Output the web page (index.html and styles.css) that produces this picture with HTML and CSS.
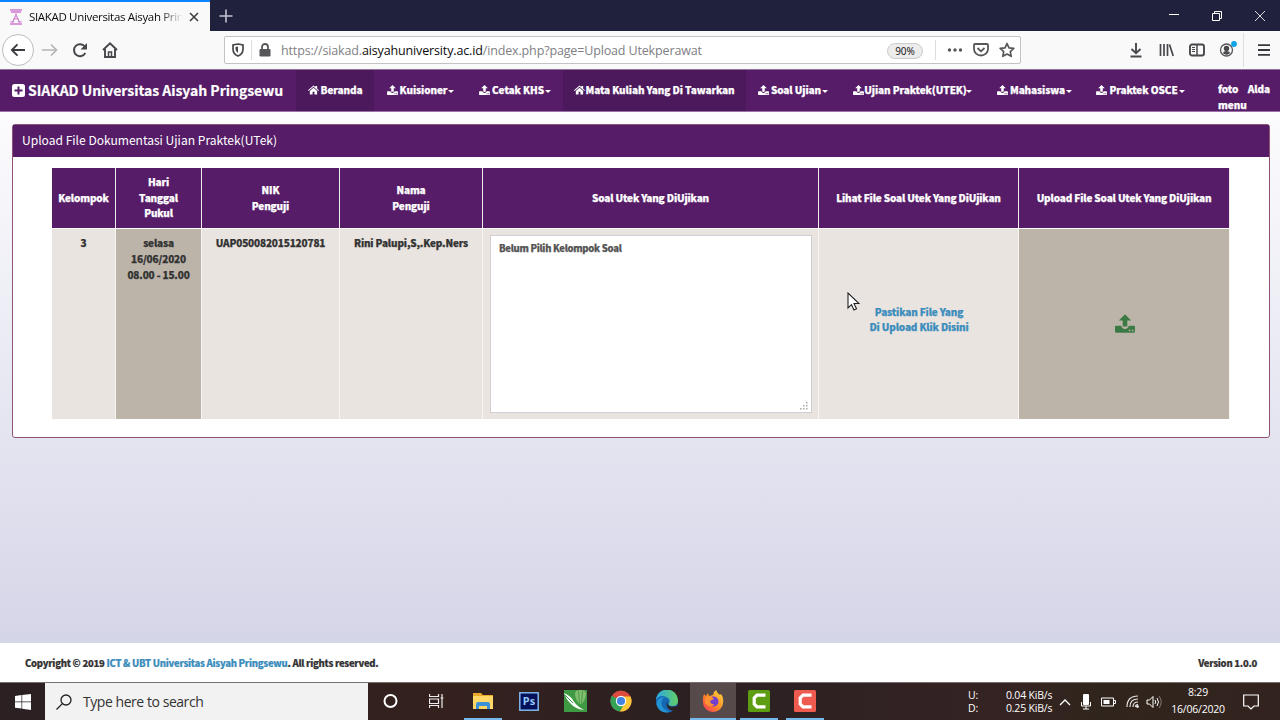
FILE: index.html
```html
<!DOCTYPE html>
<html lang="id">
<head>
<meta charset="utf-8">
<title>SIAKAD Universitas Aisyah Pringsewu</title>
<link rel="stylesheet" href="styles.css">
</head>
<body>
<svg class="defs" width="0" height="0">
  <symbol id="upload" viewBox="0 0 26 24"><path d="M13 0l8 8h-5v8h-6V8H5zM1 15h7q1 4 5 4t5-4h7q1 0 1 1.500v6q0 1.500-1.500 1.500h-23Q0 24 0 22.500v-6Q0 15 1 15zM18 20v2h2v-2zm4 0v2h2v-2z" fill="currentColor" fill-rule="evenodd"/></symbol>
  <symbol id="home" viewBox="0 0 24 20"><path d="M12 5l8 7v8h-6v-6h-4v6H4v-8zM12 0l4 3.500V1h4v6l4 3.500-1.500 1.500L12 3 1.500 12 0 10.500z" fill="currentColor"/></symbol>
</svg>
<div class="tabs">
  <div class="tab">
    <svg class="favicon" width="14" height="16" viewBox="0 0 14 16" fill="none" stroke="#cf7acd"><path d="M1 1h12M2 3h10M1 15h12M1.500 12.800h3.500M9 12.800h3.500" stroke-width="1.300"/><path d="M7 4v3M7 6l-3.500 7M7 6l3.500 7M5 10h4" stroke-width="1.100"/></svg>
    <span class="tab-title">SIAKAD Universitas Aisyah Pring</span>
    <svg width="10" height="10" viewBox="0 0 10 10"><path d="M1 1l8 8M9 1L1 9" stroke="#3f3f43" stroke-width="1.600"/></svg>
  </div>
  <svg class="plus" width="14" height="14" viewBox="0 0 14 14"><path d="M7 .5v13M.5 7h13" stroke="#c4c4cf" stroke-width="1.600"/></svg>
  <div class="window-buttons">
    <svg width="10" height="10" viewBox="0 0 10 10"><path d="M0 3.500h10" stroke="#fff"/></svg>
    <svg width="10" height="10" viewBox="0 0 10 10" fill="none" stroke="#fff"><path d="M.5 2.500h7v7h-7zM2.500 2V.5h7v7H8"/></svg>
    <svg width="10" height="10" viewBox="0 0 10 10"><path d="M0 0l10 10M10 0L0 10" stroke="#ddd"/></svg>
  </div>
</div>
<div class="toolbar">
  <span class="back"><svg width="16" height="14" viewBox="0 0 16 14" fill="none" stroke="#39393d" stroke-width="1.800"><path d="M15 7H2M7.500 1.300L1.800 7l5.700 5.700"/></svg></span>
  <svg class="forward" width="16" height="14" viewBox="0 0 16 14" fill="none" stroke="#b5b5b7" stroke-width="1.700"><path d="M0 7h14M9 1.500L14.500 7 9 12.500"/></svg>
  <svg class="reload" width="16" height="16" viewBox="0 0 16 16"><path d="M12.800 4.500A6 6 0 1 0 13.300 11" fill="none" stroke="#48484c" stroke-width="2"/><path d="M15 1v6.500H8.500z" fill="#48484c"/></svg>
  <svg class="go-home" width="16" height="16" viewBox="0 0 16 16" fill="none" stroke="#48484c" stroke-width="1.900"><path d="M1 8l7-6.600L15 8M3 7v8h10V7"/><path d="M6.500 15v-5h3v5" stroke-width="1.500"/></svg>
  <div class="address">
    <svg width="12" height="14" viewBox="0 0 12 14"><path d="M6 1l5 1v4q0 5-5 7Q1 11 1 6V2z" fill="none" stroke="#48484c" stroke-width="1.700"/><path d="M6 3.500V10Q3.500 8.500 3.500 6V4z" fill="#48484c"/></svg>
    <i class="divider"></i>
    <svg width="12" height="14" viewBox="0 0 12 14"><rect x=".5" y="6" width="11" height="7.500" rx="1.300" fill="#57575a"/><path d="M3 6V4a3 3 0 0 1 6 0v2" fill="none" stroke="#57575a" stroke-width="1.800"/></svg>
    <span class="url">https://siakad.<b>aisyahuniversity.ac.id</b>/index.php?page=Upload Utekperawat</span>
    <span class="zoom">90%</span>
    <i class="divider second"></i>
    <svg width="16" height="4" viewBox="0 0 16 4" fill="#57575a"><circle cx="2.500" cy="2" r="1.700"/><circle cx="8" cy="2" r="1.700"/><circle cx="13.500" cy="2" r="1.700"/></svg>
    <svg class="pocket" width="16" height="14" viewBox="0 0 16 14" fill="none" stroke="#57575a" stroke-width="1.800"><path d="M2 1h12q1 0 1 1v4a7 6.500 0 0 1-14 0V2q0-1 1-1zM4.500 5L8 8.300 11.500 5"/></svg>
    <svg width="16" height="16" viewBox="0 0 16 16"><path d="M8 1.500l2 4.300 4.800.6-3.500 3.200.9 4.700L8 12l-4.200 2.300.9-4.700L1.200 6.400 6 5.800z" fill="none" stroke="#57575a" stroke-width="1.700" stroke-linejoin="round"/></svg>
  </div>
  <div class="tools">
    <svg width="14" height="16" viewBox="0 0 14 16" fill="none" stroke="#48484c" stroke-width="1.900"><path d="M7 1v10M2.500 7L7 11.300 11.500 7M1.500 14.500h11"/></svg>
    <svg width="16" height="14" viewBox="0 0 16 14" stroke="#48484c" stroke-width="1.700"><path d="M2.500 1v12M6 1v12M9.500 1v12M11.500 1.500L15.200 13"/></svg>
    <svg width="16" height="14" viewBox="0 0 16 14" fill="none" stroke="#48484c"><rect x="1" y="1.500" width="14" height="11" rx="2" stroke-width="1.900"/><path d="M8 1.500v11" stroke-width="1.500"/><path d="M3 4.500h3M3 6.500h3M3 8.500h3"/></svg>
    <svg class="account" width="18" height="18" viewBox="0 0 18 18"><circle cx="7.500" cy="9" r="6" fill="none" stroke="#57575a" stroke-width="1.300"/><circle cx="7.500" cy="7.500" r="2.700" fill="#48484c"/><path d="M3.800 12q1-2 3.700-2t3.700 2q-3.700 3.500-7.400 0" fill="#48484c"/><circle cx="15" cy="3" r="2.900" fill="#10a5e8"/></svg>
    <i class="divider"></i>
    <svg width="12" height="12" viewBox="0 0 12 12" stroke="#39393d" stroke-width="1.800"><path d="M0 1.200h12M0 6h12M0 10.800h12"/></svg>
  </div>
</div>
<nav class="nav">
  <div class="brand"><svg width="13" height="13" viewBox="0 0 13 13"><rect width="13" height="13" rx="2.500" fill="#fff"/><path d="M6.500 2.500v8M2.500 6.500h8" stroke="#561c68" stroke-width="2"/></svg><span>SIAKAD Universitas Aisyah Pringsewu</span></div>
  <div class="item beranda current"><svg class="ic"><use href="#home"/></svg><span>Beranda</span></div>
  <div class="item kuisioner"><svg class="ic"><use href="#upload"/></svg><span>Kuisioner</span><i class="caret"></i></div>
  <div class="item khs"><svg class="ic"><use href="#upload"/></svg><span>Cetak KHS</span><i class="caret"></i></div>
  <div class="item matkul current tight"><svg class="ic"><use href="#home"/></svg><span>Mata Kuliah Yang Di Tawarkan</span></div>
  <div class="item soal"><svg class="ic"><use href="#upload"/></svg><span>Soal Ujian</span><i class="caret"></i></div>
  <div class="item utek tight"><svg class="ic"><use href="#upload"/></svg><span>Ujian Praktek(UTEK)</span><i class="caret"></i></div>
  <div class="item mahasiswa"><svg class="ic"><use href="#upload"/></svg><span>Mahasiswa</span><i class="caret"></i></div>
  <div class="item osce"><svg class="ic"><use href="#upload"/></svg><span>Praktek OSCE</span><i class="caret"></i></div>
  <div class="user"><span class="photo">foto<br>menu</span><span>Alda</span></div>
</nav>
<main class="content">
  <section class="panel">
    <h1>Upload File Dokumentasi Ujian Praktek(UTek)</h1>
    <div class="table">
      <div class="th">Kelompok</div>
      <div class="th">Hari<br>Tanggal<br>Pukul</div>
      <div class="th">NIK<br>Penguji</div>
      <div class="th">Nama<br>Penguji</div>
      <div class="th">Soal Utek Yang DiUjikan</div>
      <div class="th">Lihat File Soal Utek Yang DiUjikan</div>
      <div class="th">Upload File Soal Utek Yang DiUjikan</div>
      <div class="td">3</div>
      <div class="td dark">selasa<br>16/06/2020<br>08.00 - 15.00</div>
      <div class="td">UAP050082015120781</div>
      <div class="td">Rini Palupi,S,.Kep.Ners</div>
      <div class="td field"><div class="box"><span>Belum Pilih Kelompok Soal</span><svg class="grip" width="8" height="8" viewBox="0 0 8 8" fill="#aaa"><path d="M6 0h1.500v1.500H6zM6 3h1.500v1.500H6zM6 6h1.500v1.500H6zM3 3h1.500v1.500H3zM3 6h1.500v1.500H3zM0 6h1.500v1.500H0z"/></svg></div></div>
      <div class="td middle link"><a>Pastikan File Yang<br>Di Upload Klik Disini</a></div>
      <div class="td dark middle"><svg class="send" width="20" height="19"><use href="#upload"/></svg></div>
    </div>
  </section>
</main>
<footer class="footer"><span>Copyright © 2019 <a>ICT &amp; UBT Universitas Aisyah Pringsewu</a>. All rights reserved.</span><span>Version 1.0.0</span></footer>
<div class="taskbar">
  <div class="start"><svg width="16" height="16" viewBox="0 0 16 16" fill="#fff"><path d="M0 2l6.500-.9v6.400H0zM7.200 1L16 0v7.500H7.200zM0 8.200h6.500v6.400L0 13.800zM7.200 8.200H16V16l-8.800-1.200z"/></svg></div>
  <div class="search"><svg width="16" height="16" viewBox="0 0 16 16" fill="none" stroke="#222" stroke-width="1.300"><circle cx="10" cy="6" r="5"/><path d="M6.400 9.600L.5 15.500"/></svg><span>Type here to search</span></div>
  <div class="apps">
    <div class="app"><svg width="16" height="16" viewBox="0 0 16 16"><circle cx="7.500" cy="8" r="6" fill="none" stroke="#fff" stroke-width="2"/></svg></div>
    <div class="app"><svg width="16" height="16" viewBox="0 0 16 16" fill="none" stroke="#eee" stroke-width="1.200"><path d="M.5 1v2.500h9V1M.5 6h9v4.500h-9zM.5 15v-2.500h9V15M13 1v14M11.500 5h3"/></svg></div>
    <div class="app open"><svg width="20" height="18" viewBox="0 0 20 18"><path d="M0 1h8l2 2h10v14H0z" fill="#e8a92d"/><path d="M0 4h20v13H0z" fill="#ffd766"/><path d="M3 17v-5q0-2 2-2h10q2 0 2 2v5h-3v-3H6v3z" fill="#3c92d9"/></svg></div>
    <div class="app"><svg width="20" height="19" viewBox="0 0 20 19"><rect x=".8" y=".8" width="18.400" height="17.400" fill="#05105a" stroke="#80b7ea" stroke-width="1.500"/><text x="10" y="13" class="ps">Ps</text></svg></div>
    <div class="app"><svg width="23" height="22" viewBox="0 0 23 22"><path d="M0 0h23v22H0z" fill="#3f9b43"/><path d="M11 4q0-4 5.500-4T22 4q0 4-4 10h-3Q11 8 11 4z" fill="#82bd70"/><path d="M14.500 1l1 13M18.500 1l-1 13" stroke="#4b9e48"/><path d="M0 3q7 3 9.500 8 3 5 10.500 9-9-1-14-7Q2 9 0 3z" fill="#fff"/><path d="M1 5l8 8" stroke="#3f9b43"/></svg></div>
    <div class="app"><svg width="22" height="22" viewBox="0 0 22 22"><circle cx="11" cy="11" r="10.500" fill="#db4b3e"/><path d="M1.800 5.800A10.500 10.500 0 0 0 10 21.500l5-8-4-2.500z" fill="#34a355"/><path d="M20.500 6.500A10.500 10.500 0 0 1 10 21.500l5.500-10L12 6.500z" fill="#fbc735"/><circle cx="11" cy="11" r="5.200" fill="#fff"/><circle cx="11" cy="11" r="4.100" fill="#4282e3"/></svg></div>
    <div class="app"><svg width="24" height="23" viewBox="0 0 24 23"><defs><linearGradient id="edgeTop" x2="1"><stop stop-color="#2ba7e6"/><stop offset="1" stop-color="#62cf64"/></linearGradient></defs><circle cx="12" cy="11.500" r="11" fill="#1768b4"/><path d="M1 10A11 11 0 0 1 23 11q0 5-6 5-4 0-3-3 2-4-3-6Q5 4 1 10z" fill="url(#edgeTop)"/><path d="M10 7q-5 3-3 9 2 4 8 6-10 2-13-6Q0 8 10 7z" fill="#2493d2"/><path d="M12 11q0 8 10 5l2 1-4 4Q10 20 12 11z" fill="#2b2022"/></svg></div>
    <div class="app open active"><svg width="22" height="22" viewBox="0 0 22 22"><defs><linearGradient id="flame" x1="1" x2="0" y2="1"><stop stop-color="#ffe13e"/><stop offset=".5" stop-color="#ff8c28"/><stop offset="1" stop-color="#f5315c"/></linearGradient></defs><path d="M2 4l2 2 2-3 1 3 4-1q0-3 3-5 1 3 4 5l1-1q3 4 2 9a10 9 0 0 1-20 0Q0 8 2 4z" fill="url(#flame)"/><circle cx="11.500" cy="11.500" r="5" fill="#7340ce"/><path d="M4 7q5-2 8 2l-4 2q1 4 5 3-4 4-8 1T4 7z" fill="#ff9130"/></svg></div>
    <div class="app open"><svg width="22" height="22" viewBox="0 0 22 22"><rect width="22" height="22" rx="1.500" fill="#5c9d12"/><path d="M17.500 5.200H9L6.200 8v6L9 16.800h8.500" fill="none" stroke="#fff" stroke-width="3.200"/></svg></div>
    <div class="app open"><svg width="22" height="22" viewBox="0 0 22 22"><rect width="22" height="22" rx="1.500" fill="#f05b50"/><path d="M17.500 5.200H9L6.200 8v6L9 16.800h8.500" fill="none" stroke="#fff" stroke-width="3.200"/></svg></div>
  </div>
  <div class="tray">
    <div class="net"><span>U:</span><span>0.04 KiB/s</span><span>D:</span><span>0.25 KiB/s</span></div>
    <svg width="12" height="8" viewBox="0 0 12 8"><path d="M1 7l5-5 5 5" fill="none" stroke="#fff" stroke-width="1.300"/></svg>
    <svg width="10" height="16" viewBox="0 0 10 16"><rect x="2" y="0" width="6" height="11" rx="1" fill="#fff"/><path d="M.5 8v4h9V8M5 12v3M2 15h6" fill="none" stroke="#fff"/></svg>
    <svg width="15" height="10" viewBox="0 0 15 10"><path d="M.5 1h12v8H.5zM13 3.500h1.500v3H13" fill="none" stroke="#fff"/><path d="M2.500 3h6v4h-6z" fill="#fff"/></svg>
    <svg width="13" height="13" viewBox="0 0 13 13" fill="none" stroke="#e8e4e4"><path d="M1 12Q1 1 12 1M4 12q0-8 8-8M7 12q0-5 5-5M9.500 12q0-2.500 2.500-2.500" stroke-width="1.200"/><circle cx="11.500" cy="11.500" r="1" fill="#fff"/></svg>
    <svg class="sound" width="16" height="14" viewBox="0 0 16 14" fill="none" stroke="#fff"><path d="M1 5h2.500L7 1.500v11L3.500 9H1zM9 5q1.500 2 0 4M11 3q3 4 0 8"/><path d="M13 1q4.500 6 0 12" stroke="#827875"/></svg>
    <div class="clock"><span>8:29</span><span>16/06/2020</span></div>
    <svg class="notice" width="16" height="16" viewBox="0 0 16 16"><path d="M.7 1h14.600v11H11l-3 3-3-3H.7z" fill="none" stroke="#fff" stroke-width="1.200"/></svg>
  </div>
</div>
<svg class="cursor" width="13" height="20" viewBox="0 0 13 20"><path d="M1 1v15l3.500-3.300L7 18l2.500-1.200L7 11.500h5z" fill="#fff" stroke="#222" stroke-width="1.100"/></svg>
</body>
</html>
```
FILE: styles.css
```css
* { box-sizing: border-box; }
body { margin: 0; width: 1280px; height: 720px; overflow: hidden; display: flex; flex-direction: column; font-family: "Noto Sans CJK SC", "Noto Sans", sans-serif; font-size: 10px; font-weight: 900; color: #333; position: relative; }
svg { display: block; flex: none; }
.defs { position: absolute; }
a { color: #3c8dbc; }
.tabs { height: 31px; background: #20223d; display: flex; align-items: center; flex: none; }
.tab { width: 210px; height: 31px; background: #f9f9fa; border-top: 2px solid #0a84ff; display: flex; align-items: center; padding: 0 0 0 9px; }
.tab-title { font: 11.500px/20px "Open Sans", sans-serif; letter-spacing: -.33px; color: #0c0c0d; width: 154px; margin: 1px 6px 0; white-space: nowrap; -webkit-mask-image: linear-gradient(90deg, #000 85%, transparent); mask-image: linear-gradient(90deg, #000 85%, transparent); }
.plus { margin-left: 9px; }
.window-buttons { margin: 0 15px 0 auto; display: flex; gap: 33px; }
.toolbar { height: 39px; background: #f9f9fa; border-bottom: 1px solid #8f739b; display: flex; align-items: center; flex: none; padding-left: 2px; }
.back { width: 32px; height: 32px; border: 1px solid #bdbdbf; border-radius: 50%; display: grid; place-items: center; background: #fff; }
.forward { margin-left: 8px; }
.reload { margin-left: 14px; }
.go-home { margin-left: 14px; }
.address { width: 797px; height: 28px; margin-left: 106px; border: 1px solid #c3c3c5; border-radius: 2px; background: #fff; display: flex; align-items: center; padding-left: 7px; }
.divider { width: 1px; height: 20px; background: #dededf; margin: 0 7px 0 7px; }
.url { font: 12.500px/20px "Open Sans", sans-serif; letter-spacing: -.145px; color: #808084; margin: 2px 0 0 10px; width: 600px; white-space: nowrap; }
.url b { font-weight: 400; color: #0c0c0d; }
.zoom { font: 10px/14px "Noto Sans", sans-serif; color: #222; width: 36px; height: 16px; text-align: center; border: 1px solid #ccc; border-radius: 8px; background: #ececed; margin: 1px 0 0 6px; }
.divider.second { margin: 0 11px 0 12px; }
.pocket { margin: 0 10px; }
.tools { display: flex; align-items: center; margin-left: 108px; gap: 15px; }
.tools .divider { height: 34px; margin: 0 -1px 0 -9px; }
.account { margin-left: -1px; }
.nav { height: 42px; background: #561c68; border-bottom: 1px solid #9a72a8; color: #fff; display: flex; align-items: center; flex: none; white-space: nowrap; letter-spacing: -.08px; -webkit-text-stroke: .25px #fff; }
.brand { width: 296px; padding-left: 12px; display: flex; align-items: center; gap: 3px; font-size: 14px; line-height: 20px; font-weight: 700; letter-spacing: -.03px; -webkit-text-stroke: .2px #fff; }
.brand span { padding-bottom: 2px; }
.item { height: 41px; display: flex; align-items: center; justify-content: center; gap: 2px; padding-bottom: 1px; }
.item span { padding-bottom: 2px; }
.item.tight { gap: 0; }
.current { background: #4b195c; }
.ic { width: 11px; height: 10px; }
.caret { border: 3px solid transparent; border-top-color: #fff; border-bottom: 0; margin: 2px 0 0 -1px; }
.beranda { width: 78px; }
.kuisioner { width: 93px; }
.khs { width: 96px; }
.matkul { width: 183px; }
.soal { width: 94px; }
.utek { width: 145px; }
.mahasiswa { width: 99px; }
.osce { width: 113px; }
.user { display: flex; gap: 1px; line-height: 16px; align-self: flex-start; padding: 11px 0 0 21px; }
.content { height: 531px; flex: none; background: linear-gradient(#fcfcfe, #d5d5e8); padding: 12px 10px 0 12px; }
.panel { height: 314px; background: #fff; border: 1px solid #8d5474; border-radius: 3px; }
.panel h1 { margin: 0; height: 32px; font-size: 12.050px; line-height: 29px; font-weight: 400; color: #fff; background: #561c68; padding-left: 9px; }
.table { display: grid; grid-template-columns: 64px 86px 138px 143px 336px 200px 211px; grid-template-rows: 60px 190px; row-gap: 1px; margin: 11px 0 0 39px; width: 1178px; line-height: 15.800px; text-align: center; letter-spacing: -.15px; -webkit-text-stroke: .25px; }
.th { background: #561c68; color: #fff; display: grid; place-content: center; border-right: 1px solid #eee; padding-bottom: 1px; }
.td { background: #e9e4df; padding-top: 6px; border-right: 1px solid #f8f5f3; white-space: nowrap; }
.td.dark { background: #bcb4a9; }
.td.middle { display: grid; place-content: center; padding: 0 0 2px 1px; }
.td.link { padding-bottom: 10px; line-height: 15.300px; }
.td.field { padding: 6px 6px 7px 7px; }
.box { width: 322px; height: 178px; background: #fff; border: 1px solid #d0cdd3; display: flex; flex-direction: column; justify-content: space-between; align-items: flex-start; padding: 5px 3px 2px 8px; color: #555; font-size: 9.500px; letter-spacing: -.28px; }
.grip { align-self: flex-end; }
.send { color: #3b7a45; }
.footer { height: 39px; flex: none; background: #fff; display: flex; justify-content: space-between; align-items: center; padding: 0 23px 0 25px; font-size: 9.500px; letter-spacing: -.265px; -webkit-text-stroke: .2px; }
.taskbar { height: 38px; flex: none; background: linear-gradient(90deg, #2b2022, #34211e 35%, #2b2022 55%, #352323 78%, #30251c 86%, #33231f); display: flex; color: #fff; border-top: 1px solid #77706f; }
.start { width: 45px; display: grid; place-items: center; }
.search { width: 323px; background: #f2f2f2; color: #333; font: 14px/20px "Open Sans", sans-serif; letter-spacing: -.45px; display: flex; align-items: center; gap: 11px; padding-left: 11px; }
.apps { display: flex; }
.app { width: 46px; display: grid; place-items: center; border-bottom: 3px solid transparent; background-clip: padding-box; padding-top: 2px; }
.app.open { background: linear-gradient(#76b9ed, #76b9ed) center bottom / 38px 2px no-repeat border-box; }
.app.active { background: linear-gradient(#76b9ed, #76b9ed) center bottom / 46px 2px no-repeat border-box, #574a4b; }
.ps { font: 700 11px "Noto Sans", sans-serif; fill: #91c8f8; text-anchor: middle; }
.tray { margin-left: auto; display: flex; align-items: center; font: 10.500px/13px "Open Sans", sans-serif; letter-spacing: -.2px; padding-right: 21px; }
.net { display: grid; grid-template-columns: 28px 46px; justify-content: space-between; width: 84px; margin-right: 7px; white-space: nowrap; }
.tray svg + svg { margin-left: 10px; }
.tray svg + .sound { margin-left: 7px; }
.clock { width: 70px; text-align: center; display: flex; flex-direction: column; line-height: 17px; margin-left: 1px; margin-top: -2px; }
.tray .notice { margin-left: 10px; }
.cursor { position: absolute; left: 847px; top: 292px; }
```
